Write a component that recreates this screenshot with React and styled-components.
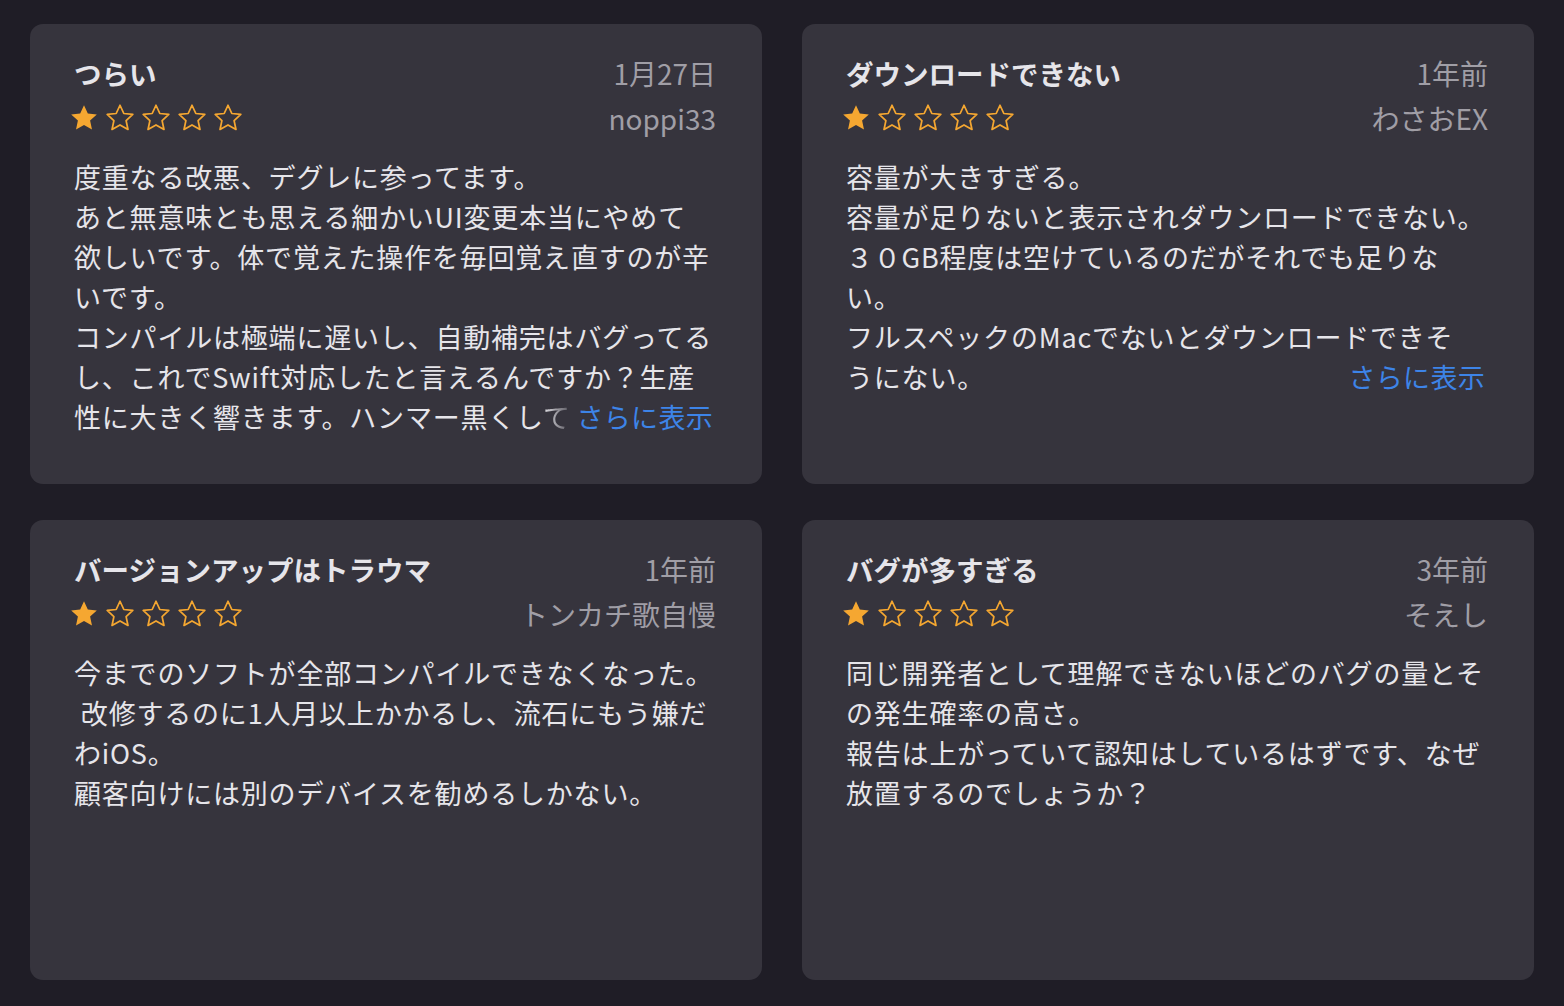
import React from "react";
import styled, { createGlobalStyle } from "styled-components";

const GlobalStyle = createGlobalStyle`
  html, body {
    margin: 0;
    padding: 0;
    background: #1f1d26;
  }
  body {
    font-family: "Noto Sans CJK JP", "Noto Sans", sans-serif;
    -webkit-font-smoothing: antialiased;
  }
`;

const Page = styled.div`
  width: 1564px;
  height: 1006px;
  box-sizing: border-box;
  padding: 24px 30px 26px 30px;
  display: grid;
  grid-template-columns: 732px 732px;
  grid-template-rows: 460px 460px;
  column-gap: 40px;
  row-gap: 36px;
`;

const Card = styled.div`
  background: #36343d;
  border-radius: 13px;
  padding: 30px 46px 0 44px;
  box-sizing: border-box;
  color: #e6e5ea;
`;

const Row = styled.div`
  display: flex;
  justify-content: space-between;
  align-items: center;
  height: 38px;
  margin-top: ${(p) => p.$gap || 0}px;
`;

const Title = styled.div`
  font-size: 27.5px;
  font-weight: 700;
  color: #e6e5ea;
  line-height: 38px;
`;

const Meta = styled.div`
  font-size: 28px;
  color: #a09ea6;
  line-height: 38px;
`;

const Stars = styled.div`
  display: flex;
  gap: 6px;
  margin-left: -5px;
`;

const Body = styled.div`
  margin-top: 20px;
  font-size: 27px;
  letter-spacing: 0.8px;
  line-height: 40px;
`;

const Line = styled.div`
  height: 40px;
  white-space: pre;
`;

const LastLine = styled.div`
  height: 40px;
  display: flex;
  justify-content: space-between;
  white-space: pre;
`;

const Fade = styled.span`
  background: linear-gradient(to right, #e6e5ea 0%, rgba(230, 229, 234, 0.15) 100%);
  -webkit-background-clip: text;
  background-clip: text;
  color: transparent;
`;

const More = styled.span`
  color: #3d84e8;
  letter-spacing: 0.3px;
  margin-right: 3px;
`;

const Star = ({ filled }) => (
  <svg width="30" height="30" viewBox="0 0 24 24">
    <path
      d="M12 1.8l3.05 6.6 7.2.78-5.37 4.88 1.5 7.1L12 17.56 5.62 21.16l1.5-7.1L1.75 9.18l7.2-.78z"
      fill={filled ? "#f5a731" : "none"}
      stroke="#f5a731"
      strokeWidth={filled ? 0 : 1.4}
      strokeLinejoin="round"
    />
  </svg>
);

const Rating = ({ value }) => (
  <Stars>
    {[1, 2, 3, 4, 5].map((i) => (
      <Star key={i} filled={i <= value} />
    ))}
  </Stars>
);

const reviews = [
  {
    title: "つらい",
    date: "1月27日",
    author: "noppi33",
    text: [
      "度重なる改悪、デグレに参ってます。",
      "あと無意味とも思える細かいUI変更本当にやめて",
      "欲しいです。体で覚えた操作を毎回覚え直すのが辛",
      "いです。",
      "コンパイルは極端に遅いし、自動補完はバグってる",
      "し、これでSwift対応したと言えるんですか？生産",
    ],
    last: "性に大きく響きます。ハンマー黒くし",
    fade: "て",
  },
  {
    title: "ダウンロードできない",
    date: "1年前",
    author: "わさおEX",
    text: [
      "容量が大きすぎる。",
      "容量が足りないと表示されダウンロードできない。",
      "３０GB程度は空けているのだがそれでも足りな",
      "い。",
      "フルスペックのMacでないとダウンロードできそ",
    ],
    last: "うにない。",
  },
  {
    title: "バージョンアップはトラウマ",
    date: "1年前",
    author: "トンカチ歌自慢",
    text: [
      "今までのソフトが全部コンパイルできなくなった。",
      " 改修するのに1人月以上かかるし、流石にもう嫌だ",
      "わiOS。",
      "顧客向けには別のデバイスを勧めるしかない。",
    ],
  },
  {
    title: "バグが多すぎる",
    date: "3年前",
    author: "そえし",
    text: [
      "同じ開発者として理解できないほどのバグの量とそ",
      "の発生確率の高さ。",
      "報告は上がっていて認知はしているはずです、なぜ",
      "放置するのでしょうか？",
    ],
  },
];

const ReviewCard = ({ review }) => (
  <Card>
    <Row>
      <Title>{review.title}</Title>
      <Meta>{review.date}</Meta>
    </Row>
    <Row $gap={7}>
      <Rating value={1} />
      <Meta>{review.author}</Meta>
    </Row>
    <Body>
      {review.text.map((t, i) => (
        <Line key={i}>{t}</Line>
      ))}
      {review.last && (
        <LastLine>
          <span>
            {review.last}
            {review.fade && <Fade>{review.fade}</Fade>}
          </span>
          <More>さらに表示</More>
        </LastLine>
      )}
    </Body>
  </Card>
);

export default function App() {
  return (
    <>
      <GlobalStyle />
      <Page>
        {reviews.map((r) => (
          <ReviewCard key={r.title} review={r} />
        ))}
      </Page>
    </>
  );
}
